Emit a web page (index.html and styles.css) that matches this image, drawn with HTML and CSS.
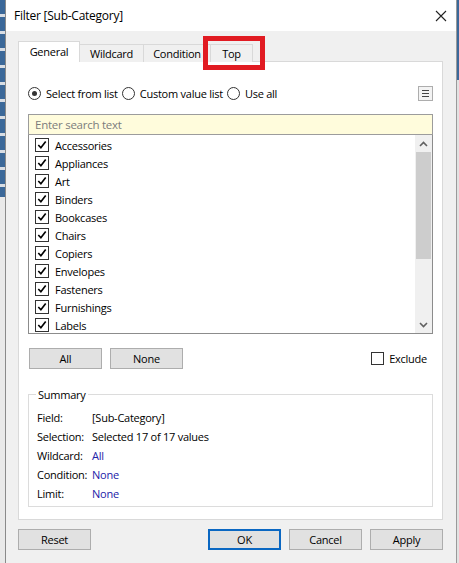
FILE: index.html
```html
<!DOCTYPE html>
<html>
<head>
<meta charset="utf-8">
<link rel="stylesheet" href="styles.css">
</head>
<body>
<div class="screen">
  <div class="bg-left"></div>
  <div class="dialog">
    <div class="titlebar">
      <span class="title">Filter [Sub-Category]</span>
      <svg class="close" width="12" height="12" viewBox="0 0 12 12"><path d="M1 1 L11 11 M11 1 L1 11" stroke="#222" stroke-width="1.1" fill="none"/></svg>
    </div>
    <div class="body">
      <div class="tabs">
        <div class="tab active">General</div>
        <div class="tab">Wildcard</div>
        <div class="tab">Condition</div>
        <div class="tab tab-top">Top<span class="highlight"></span></div>
      </div>
      <div class="panel">
        <div class="radio-row">
          <label class="radio"><span class="dot on"></span>Select from list</label>
          <label class="radio"><span class="dot"></span>Custom value list</label>
          <label class="radio"><span class="dot"></span>Use all</label>
          <span class="spacer"></span>
          <span class="menu-btn"><i></i><i></i><i></i></span>
        </div>
        <div class="search">Enter search text</div>
        <div class="list">
          <div class="items">
            <div class="item"><span class="cb"><svg viewBox="0 0 13 13"><path d="M2.5 6.5 L5.3 9.5 L10.5 2.8" stroke="#000" stroke-width="1.8" fill="none"/></svg></span>Accessories</div>
            <div class="item"><span class="cb"><svg viewBox="0 0 13 13"><path d="M2.5 6.5 L5.3 9.5 L10.5 2.8" stroke="#000" stroke-width="1.8" fill="none"/></svg></span>Appliances</div>
            <div class="item"><span class="cb"><svg viewBox="0 0 13 13"><path d="M2.5 6.5 L5.3 9.5 L10.5 2.8" stroke="#000" stroke-width="1.8" fill="none"/></svg></span>Art</div>
            <div class="item"><span class="cb"><svg viewBox="0 0 13 13"><path d="M2.5 6.5 L5.3 9.5 L10.5 2.8" stroke="#000" stroke-width="1.8" fill="none"/></svg></span>Binders</div>
            <div class="item"><span class="cb"><svg viewBox="0 0 13 13"><path d="M2.5 6.5 L5.3 9.5 L10.5 2.8" stroke="#000" stroke-width="1.8" fill="none"/></svg></span>Bookcases</div>
            <div class="item"><span class="cb"><svg viewBox="0 0 13 13"><path d="M2.5 6.5 L5.3 9.5 L10.5 2.8" stroke="#000" stroke-width="1.8" fill="none"/></svg></span>Chairs</div>
            <div class="item"><span class="cb"><svg viewBox="0 0 13 13"><path d="M2.5 6.5 L5.3 9.5 L10.5 2.8" stroke="#000" stroke-width="1.8" fill="none"/></svg></span>Copiers</div>
            <div class="item"><span class="cb"><svg viewBox="0 0 13 13"><path d="M2.5 6.5 L5.3 9.5 L10.5 2.8" stroke="#000" stroke-width="1.8" fill="none"/></svg></span>Envelopes</div>
            <div class="item"><span class="cb"><svg viewBox="0 0 13 13"><path d="M2.5 6.5 L5.3 9.5 L10.5 2.8" stroke="#000" stroke-width="1.8" fill="none"/></svg></span>Fasteners</div>
            <div class="item"><span class="cb"><svg viewBox="0 0 13 13"><path d="M2.5 6.5 L5.3 9.5 L10.5 2.8" stroke="#000" stroke-width="1.8" fill="none"/></svg></span>Furnishings</div>
            <div class="item"><span class="cb"><svg viewBox="0 0 13 13"><path d="M2.5 6.5 L5.3 9.5 L10.5 2.8" stroke="#000" stroke-width="1.8" fill="none"/></svg></span>Labels</div>
          </div>
          <div class="scrollbar">
            <div class="arrow"><svg width="9" height="6" viewBox="0 0 9 6"><path d="M1 5 L4.5 1.5 L8 5" stroke="#606060" stroke-width="1.6" fill="none"/></svg></div>
            <div class="thumb"></div>
            <div class="track"></div>
            <div class="arrow"><svg width="9" height="6" viewBox="0 0 9 6"><path d="M1 1 L4.5 4.5 L8 1" stroke="#606060" stroke-width="1.6" fill="none"/></svg></div>
          </div>
        </div>
        <div class="btn-row">
          <button class="btn">All</button>
          <button class="btn">None</button>
          <span class="spacer"></span>
          <label class="exclude"><span class="cb empty"></span>Exclude</label>
        </div>
        <fieldset class="summary">
          <legend>Summary</legend>
          <div class="srow"><span class="key">Field:</span><span>[Sub-Category]</span></div>
          <div class="srow"><span class="key">Selection:</span><span>Selected 17 of 17 values</span></div>
          <div class="srow"><span class="key">Wildcard:</span><span class="blue">All</span></div>
          <div class="srow"><span class="key">Condition:</span><span class="blue">None</span></div>
          <div class="srow"><span class="key">Limit:</span><span class="blue">None</span></div>
        </fieldset>
      </div>
      <div class="footer">
        <button class="btn wide">Reset</button>
        <span class="spacer"></span>
        <button class="btn wide default">OK</button>
        <button class="btn wide">Cancel</button>
        <button class="btn wide">Apply</button>
      </div>
    </div>
  </div>
  <div class="bg-right"></div>
</div>
</body>
</html>
```
FILE: styles.css
```css
html, body {
  margin: 0;
  padding: 0;
}
body {
  width: 459px;
  height: 563px;
  overflow: hidden;
  font-family: "Open Sans", "Noto Sans", sans-serif;
  font-size: 11px;
  letter-spacing: -0.25px;
  color: #000;
}
.screen {
  display: flex;
  height: 563px;
}
.bg-left {
  width: 5px;
  background:
    linear-gradient(to bottom, transparent 0 197px, #e9e9e9 197px),
    repeating-linear-gradient(to bottom, #3b6899 0 14px, #d8dde4 14px 17px);
}
.bg-right {
  flex: 1;
  background: linear-gradient(to bottom, #3b6899 0 80px, #e2e2e2 80px);
  border-left: 1px solid #9a9a9a;
}
.dialog {
  width: 450px;
  border-left: 1px solid #8a8a8a;
  display: flex;
  flex-direction: column;
  background: #f0f0f0;
}
.titlebar {
  height: 31px;
  background: #fff;
  display: flex;
  align-items: center;
  padding: 0 9px 0 8px;
}
.title {
  font-size: 12px;
  flex: 1;
}
.body {
  flex: 1;
  padding: 11px 13px 0 12px;
  display: flex;
  flex-direction: column;
}
.tabs {
  display: flex;
  height: 20px;
  align-items: flex-end;
  position: relative;
  z-index: 1;
}
.tab {
  height: 17px;
  line-height: 17px;
  border: 1px solid #d9d9d9;
  border-bottom: none;
  background: #f0f0f0;
  padding: 0 8px;
  margin-left: -1px;
  position: relative;
  text-align: center;
}
.tab.active {
  height: 20px;
  line-height: 19px;
  background: #fff;
  margin-left: 0;
  width: 44px;
}
.tab:nth-child(2) { width: 47px; }
.tab:nth-child(3) { width: 50px; }
.tab-top { width: 25px; }
.highlight {
  position: absolute;
  left: -8px;
  top: -9px;
  width: 52px;
  height: 24px;
  border: 5px solid #e11b22;
}
.panel {
  height: 457px;
  background: #fff;
  border: 1px solid #d9d9d9;
  margin-top: -1px;
  padding: 0 9px;
  display: flex;
  flex-direction: column;
}
.radio-row {
  display: flex;
  align-items: center;
  height: 15px;
  margin-top: 24px;
}
.radio {
  display: flex;
  align-items: center;
  margin-right: 4px;
}
.dot {
  width: 11px;
  height: 11px;
  border: 1px solid #333;
  border-radius: 50%;
  margin-right: 5px;
  position: relative;
  box-sizing: content-box;
}
.dot.on::after {
  content: "";
  position: absolute;
  left: 3px;
  top: 3px;
  width: 5px;
  height: 5px;
  border-radius: 50%;
  background: #333;
}
.spacer { flex: 1; }
.menu-btn {
  width: 13px;
  height: 13px;
  border: 1px solid #adadad;
  background: #f3f3f3;
  display: flex;
  flex-direction: column;
  justify-content: center;
  align-items: center;
  gap: 2px;
}
.menu-btn i {
  display: block;
  width: 7px;
  height: 1px;
  background: #444;
}
.search {
  margin-top: 13px;
  height: 19px;
  line-height: 19px;
  border: 1px solid #9c9c9c;
  background: #fffcdc;
  color: #7c7c7c;
  padding-left: 6px;
  font-size: 11.5px;
}
.list {
  height: 198px;
  border: 1px solid #8c8c8c;
  border-top: none;
  display: flex;
}
.items {
  flex: 1;
  padding: 1px 0 0 6px;
}
.item {
  height: 18px;
  display: flex;
  align-items: center;
}
.cb {
  width: 12px;
  height: 12px;
  border: 1px solid #333;
  margin-right: 6px;
  display: block;
  flex: none;
}
.cb svg {
  display: block;
  width: 12px;
  height: 12px;
}
.scrollbar {
  width: 17px;
  background: #f0f0f0;
  display: flex;
  flex-direction: column;
}
.arrow {
  height: 17px;
  display: flex;
  align-items: center;
  justify-content: center;
}
.thumb {
  height: 107px;
  background: #cdcdcd;
  margin: 0 1px;
}
.track { flex: 1; }
.btn-row {
  margin-top: 14px;
  display: flex;
  align-items: center;
  padding-left: 1px;
  height: 21px;
}
.btn {
  font: inherit;
  letter-spacing: inherit;
  width: 73px;
  height: 21px;
  background: #e1e1e1;
  border: 1px solid #adadad;
  padding: 0;
  color: #000;
  margin-right: 8px;
}
.exclude {
  display: flex;
  align-items: center;
  margin-right: 6px;
}
.cb.empty {
  width: 11px;
  height: 11px;
  margin-right: 5px;
}
.summary {
  margin: 18px 0 0 0;
  padding: 6px 8px 0 8px;
  height: 120px;
  border: 1px solid #dcdcdc;
  box-sizing: border-box;
}
.summary legend {
  padding: 0 2px;
  margin-left: -1px;
}
.srow {
  height: 19px;
  display: flex;
  align-items: center;
}
.key {
  width: 55px;
}
.blue { color: #2222a8; }
.footer {
  display: flex;
  margin-top: 9px;
  height: 21px;
}
.footer .btn { margin-right: 0; margin-left: 8px; }
.footer .btn:first-child { margin-left: 0; }
.btn.wide { width: 73px; }
.btn.default {
  border: 2px solid #0a67c2;
}
```
